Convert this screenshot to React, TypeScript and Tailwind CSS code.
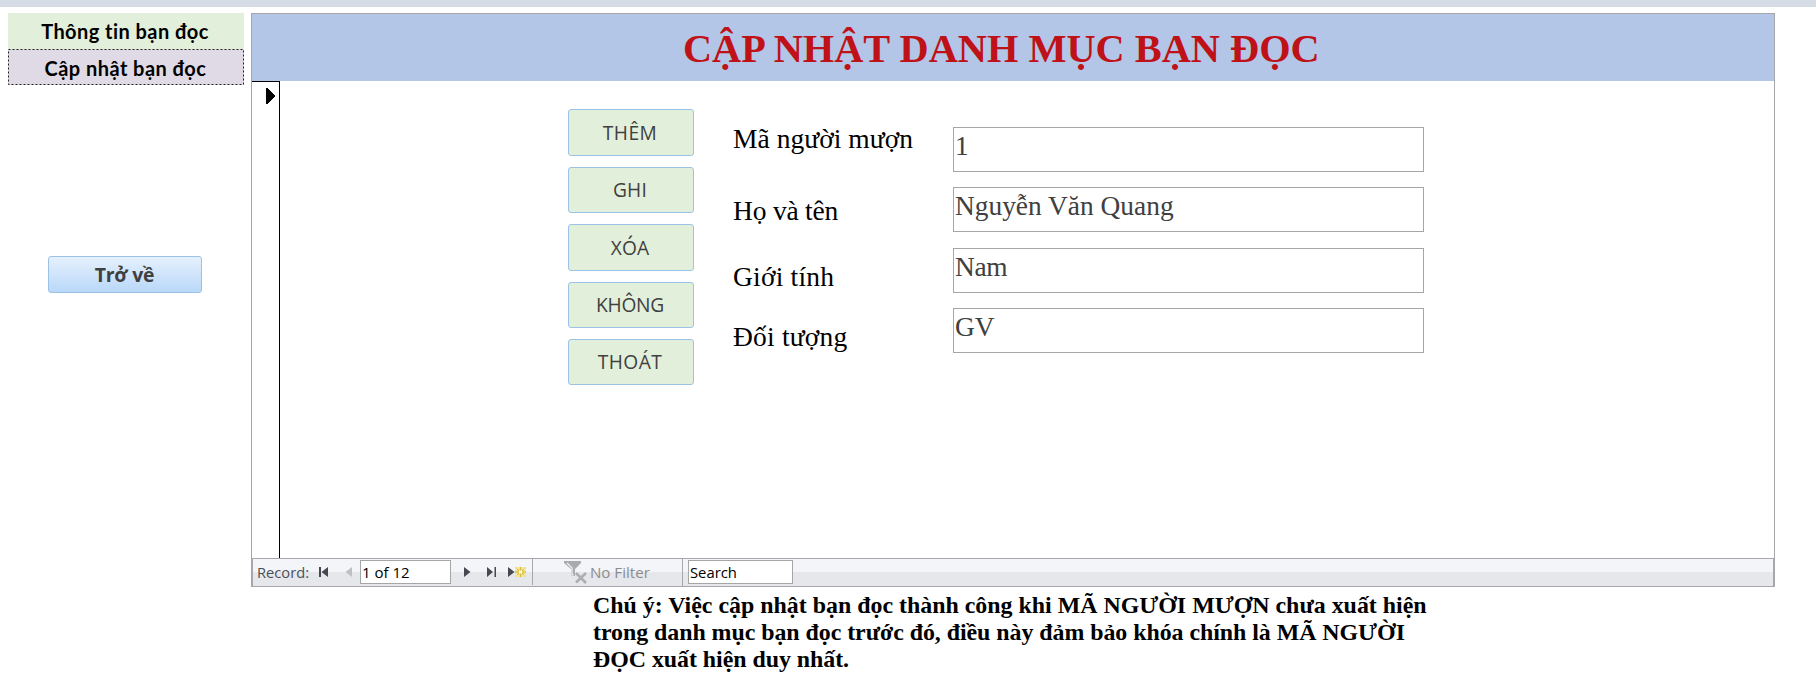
type FieldRow = {
  label: string;
  value: string;
  labelClass: string;
  boxClass: string;
};

const ACTIONS = [
  { label: "THÊM", className: "h-[47px]", textClass: "tracking-[0.5px]" },
  { label: "GHI", className: "mt-[11px] h-[46px]", textClass: "tracking-[0.2px]" },
  { label: "XÓA", className: "mt-[11px] h-[47px]", textClass: "tracking-[0.2px]" },
  { label: "KHÔNG", className: "mt-[11px] h-[46px]", textClass: "tracking-[-0.2px]" },
  { label: "THOÁT", className: "mt-[11px] h-[46px]", textClass: "tracking-[0.4px]" },
];

const FIELDS: FieldRow[] = [
  { label: "Mã người mượn", value: "1", labelClass: "tracking-[0.04px]", boxClass: "" },
  { label: "Họ và tên", value: "Nguyễn Văn Quang", labelClass: "mt-[42px] tracking-[-0.2px]", boxClass: "mt-[15px]" },
  { label: "Giới tính", value: "Nam", labelClass: "mt-9 tracking-[0.2px]", boxClass: "mt-4 tracking-[-0.4px]" },
  { label: "Đối tượng", value: "GV", labelClass: "mt-[30px] tracking-[0.2px]", boxClass: "mt-[15px]" },
];

function Sidebar() {
  return (
    <nav className="ml-2 mt-[6px] flex w-[236px] shrink-0 flex-col font-['Lato',sans-serif] text-[20px] font-bold leading-[36px] tracking-[0.45px] text-black">
      <a className="h-9 bg-[#e2efda] pr-[2px] text-center">Thông tin bạn đọc</a>
      <a className="relative h-9 bg-[#dfdae6] pr-[1px] text-center leading-[38px]">
        Cập nhật bạn đọc
        <svg className="absolute inset-0" width="236" height="36" fill="none">
          <rect x="0.5" y="0.5" width="235" height="35" stroke="#222" strokeDasharray="2 2" />
        </svg>
      </a>
      <button className="ml-10 mt-[171px] h-[37px] w-[154px] rounded-[3px] border border-[#9cc3e6] bg-linear-to-b from-[#e6f0fd] to-[#b9d8f9] pr-[1px] font-['Open_Sans',sans-serif] text-[19.4px] font-bold leading-[35px] tracking-[-0.2px] text-[#404040]">
        Trở về
      </button>
    </nav>
  );
}

function RecordBar() {
  return (
    <div className="flex h-[29px] border-y border-t-[#a6a8ae] border-b-[#a6a6a6] bg-[linear-gradient(to_bottom,#f3f5f8_0,#f3f5f8_13px,#e5e7eb_13px,#e5e7eb_100%)] font-['Open_Sans',sans-serif] text-[14.5px] leading-[26px] text-[#4c5058]">
      <span className="w-[62px] border-l border-[#a6a8ae] pl-[4px] text-[14.7px]">Record:</span>
      <svg className="shrink-0" width="46" height="27" viewBox="314 559 46 27">
        <path d="M319 567h2v10h-2zM328 567v10l-6.500-5z" fill="#47484f" />
        <path d="M352 567v10l-6.500-5z" fill="#bfc0c4" />
      </svg>
      <span className="mt-[1px] h-[24px] w-[91px] border border-[#a6a6a6] bg-white pl-[1px] text-[15px] leading-[22px] text-black">1 of 12</span>
      <svg className="shrink-0" width="82" height="27" viewBox="451 559 82 27">
        <path d="M464 567v10l6.500-5zM487 567v10l6-5zM494.500 567h1.500v10h-1.500zM508 567v10l6.500-5z" fill="#47484f" />
        <rect x="515" y="567" width="11" height="10" fill="#f3df83" />
        <path d="M520.500 567v10M515 572h11M517 569l7 6M524 569l-7 6" stroke="#d9b93a" strokeWidth="1" />
        <path d="M518 567v2M523 567v2M518 575v2M523 575v2M515 569.500h2M524 569.500h2M515 574.500h2M524 574.500h2" stroke="#f8f1c8" />
        <rect x="519" y="570.500" width="3" height="3" fill="#fffbe0" />
        <path d="M532.500 559v26" stroke="#a6a8ae" />
      </svg>
      <svg className="shrink-0" width="57" height="27" viewBox="533 559 57 27">
        <path d="M564 561h17v2l-6 6v7h-4v-7l-7-6z" fill="#aaa9ad" />
        <path d="M567 563l5 5v7h1.500" stroke="#f0f0f2" strokeWidth="1.300" fill="none" />
        <path d="M576 573l10 10M586 573l-10 9.500" stroke="#aeadb0" strokeWidth="2.600" />
      </svg>
      <span className="w-[93px] border-r border-[#a6a8ae] text-[15.1px] text-[#8c8c8e]">No Filter</span>
      <span className="ml-[5px] mt-[1px] h-[24px] w-[105px] border border-[#a6a6a6] bg-white pl-[1px] text-[14.8px] leading-[22px] text-black">Search</span>
      <span className="ml-auto w-px bg-[#a6a8ae]" />
    </div>
  );
}

function RecordForm() {
  return (
    <main className="mt-[6px] flex h-[574px] w-[1524px] flex-col border border-b-0 border-[#a6a6a6] bg-white">
      <header className="h-[67px] shrink-0 bg-[#b4c6e7] pl-[431px] pt-[11px] text-[40.35px] font-bold leading-[48px] text-[#bf1118]">
        CẬP NHẬT DANH MỤC BẠN ĐỌC
      </header>
      <div className="flex h-[477px] shrink-0">
        <div className="w-7 shrink-0 border-r border-t border-black">
          <svg className="ml-[14px] mt-[6px]" width="10" height="16" viewBox="0 0 10 16" shapeRendering="crispEdges">
            <path d="M0 0h2l7 8-7 8H0z" fill="#000" />
          </svg>
        </div>
        <div className="ml-72 mt-7 flex w-[126px] flex-col">
          {ACTIONS.map((a) => (
            <button
              key={a.label}
              className={`${a.className} flex items-center justify-center rounded-[3px] border border-[#9cc3e6] bg-[#e2efda] pr-[2px] font-['Open_Sans',sans-serif] text-[19.2px] leading-6 text-[#404040]`}
            >
              <span className={a.textClass}>{a.label}</span>
            </button>
          ))}
        </div>
        <div className="ml-[39px] mt-[43px] flex w-[220px] flex-col text-[27.5px] leading-[30px] text-black">
          {FIELDS.map((f) => (
            <label key={f.label} className={`${f.labelClass} h-[30px]`}>
              {f.label}
            </label>
          ))}
        </div>
        <div className="mt-[46px] flex w-[471px] flex-col text-[27.4px] leading-[30px] text-[#404040]">
          {FIELDS.map((f) => (
            <div key={f.label} className={`${f.boxClass} h-[45px] border border-[#a6a6a6] pl-[1px] pt-[3px]`}>
              {f.value}
            </div>
          ))}
        </div>
      </div>
      <RecordBar />
    </main>
  );
}

export default function App() {
  return (
    <div className="flex h-[680px] w-[1816px] flex-col overflow-hidden bg-white font-['Liberation_Serif',serif]">
      <div className="h-[7px] shrink-0 bg-[#d6dce5]" />
      <div className="flex gap-[7px]">
        <Sidebar />
        <RecordForm />
      </div>
      <div className="ml-[593px] mt-[5px] flex flex-col whitespace-nowrap text-[23.9px] font-bold leading-[27.2px] text-black">
        <p>Chú ý: Việc cập nhật bạn đọc thành công khi MÃ NGƯỜI MƯỢN chưa xuất hiện</p>
        <p className="tracking-[-0.04px]">trong danh mục bạn đọc trước đó, điều này đảm bảo khóa chính là MÃ NGƯỜI</p>
        <p className="tracking-[-0.04px]">ĐỌC xuất hiện duy nhất.</p>
      </div>
    </div>
  );
}
